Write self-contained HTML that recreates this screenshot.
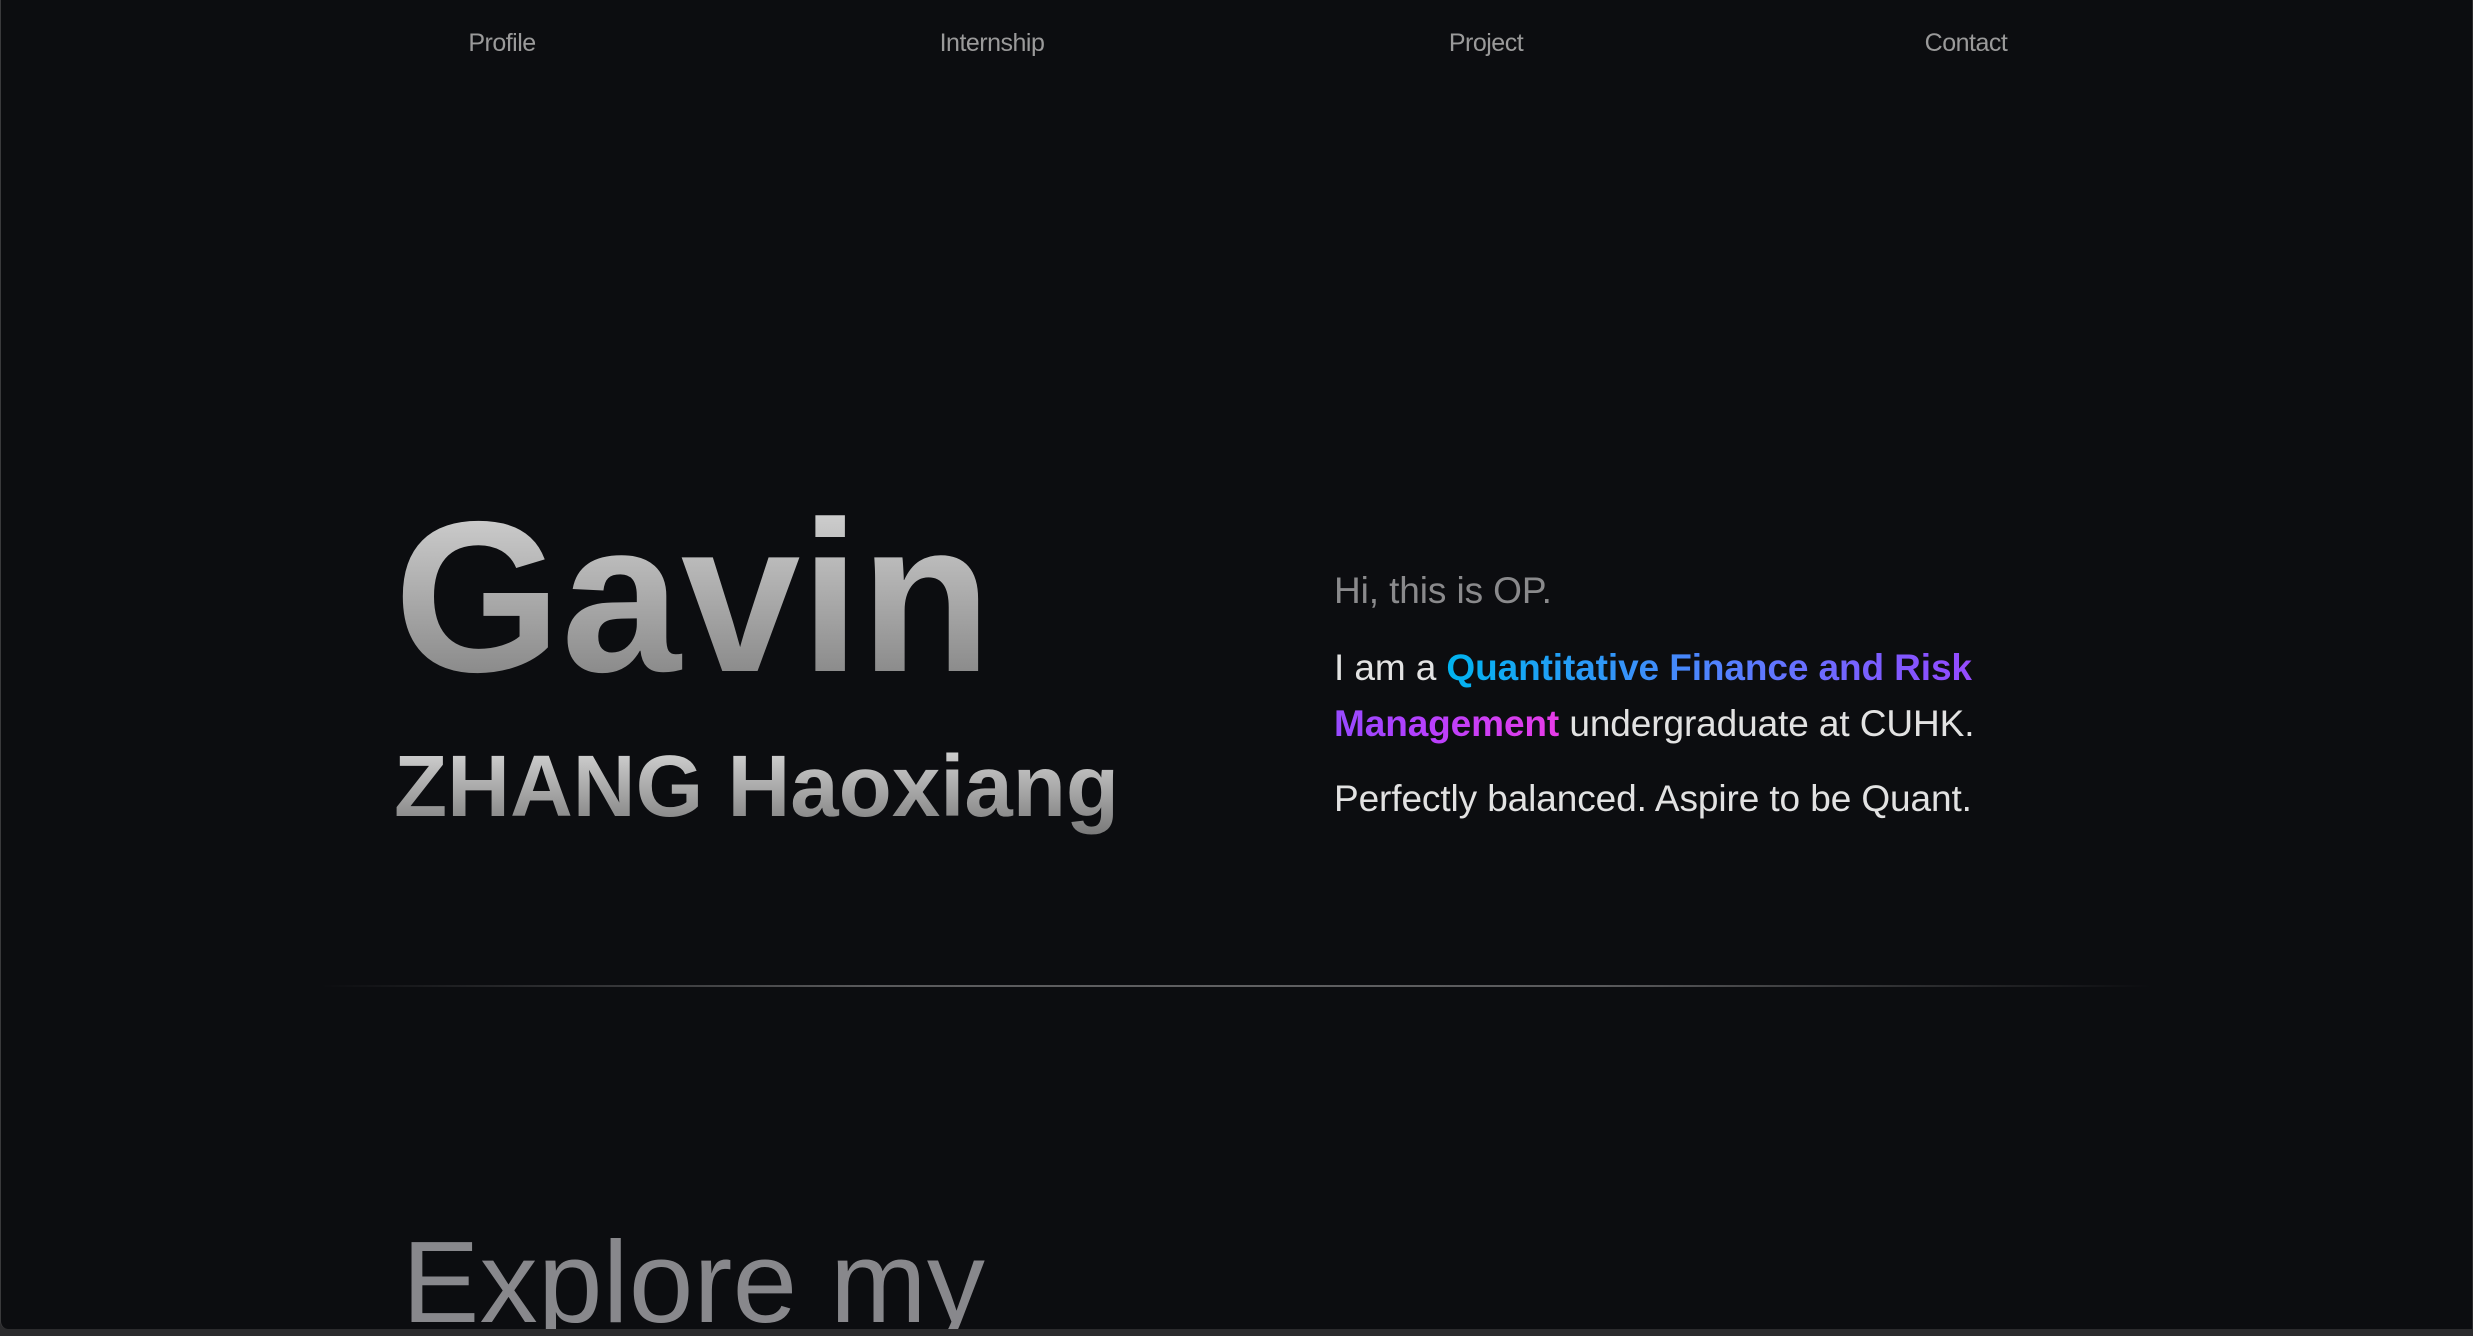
<!DOCTYPE html>
<html><head><meta charset="utf-8"><style>
html,body{margin:0;padding:0;width:2473px;height:1336px;overflow:hidden;background:#2b2b2d;}
.page{position:absolute;left:0;top:0;width:2471px;height:1329px;background:#0c0d10;border-left:1px solid #3a3a3c;border-bottom-left-radius:8px;overflow:hidden;font-family:"Liberation Sans",sans-serif;}
.nav{position:absolute;top:29px;font-size:25px;color:#9a9a9a;transform:translateX(-50%);white-space:nowrap;letter-spacing:-0.5px}
.grad{background:linear-gradient(180deg,#dedede 0%,#777 100%);-webkit-background-clip:text;background-clip:text;color:transparent;}
.gavin{position:absolute;left:393px;top:472px;font-size:215px;font-weight:bold;line-height:250px;white-space:nowrap;}
.zhang{position:absolute;left:393px;top:737px;font-size:87px;font-weight:bold;line-height:100px;white-space:nowrap;}
.r{position:absolute;left:1333px;font-size:37px;letter-spacing:-0.1px;white-space:nowrap;color:#e2e2e2;}
.hl{font-weight:bold;background:linear-gradient(90deg,#00b4f0 0%,#5a7cff 40%,#8a50ff 65%,#b040ff 80%,#e83ce8 100%);-webkit-background-clip:text;background-clip:text;color:transparent;}
.div{position:absolute;left:320px;top:985px;width:1830px;height:2px;background:linear-gradient(90deg,rgba(90,90,90,0),#5a5a5c 30%,#606062 50%,#5a5a5c 70%,rgba(90,90,90,0));}
.explore{position:absolute;left:401px;top:1212px;font-size:116px;line-height:140px;color:#88888c;white-space:nowrap;letter-spacing:0.3px}
</style></head><body>
<div class="page">
<div class="nav" style="left:501px">Profile</div>
<div class="nav" style="left:991px">Internship</div>
<div class="nav" style="left:1485px">Project</div>
<div class="nav" style="left:1965px">Contact</div>

<div class="gavin grad">Gavin</div>
<div class="zhang grad">ZHANG Haoxiang</div>

<div class="r" style="top:570px;color:#8a8a8c">Hi, this is OP.</div>
<div class="r" style="top:640px;line-height:56px">I am a <span class="hl">Quantitative Finance and Risk<br>Management</span> undergraduate at CUHK.</div>
<div class="r" style="top:778px">Perfectly balanced. Aspire to be Quant.</div>

<div class="div"></div>

<div class="explore">Explore my</div>
</div>
</body></html>
